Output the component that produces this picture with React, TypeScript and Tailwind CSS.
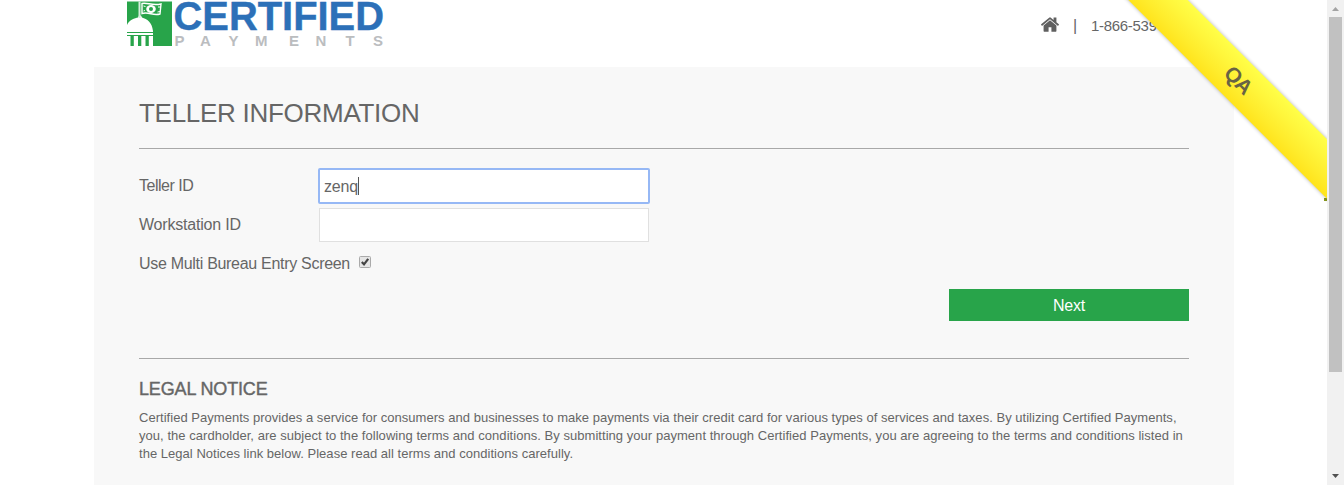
function Logo() {
  return (
    <svg width="258" height="48" viewBox="0 0 258 48" className="block overflow-visible" aria-label="Certified Payments">
      <rect x="0" y="1.500" width="45" height="44.500" fill="#28a44a" />
      <path d="M0 25C2 20 8 18 11 17.5L12 15.5H14L15 17.5C20 19 25 22 26 31V46H0Z" fill="#fff" />
      <path d="M11.500 1.500H13.500V18H11.500Z" fill="#d5efdc" />
      <path d="M0 32.500H26M0 35.500H26" stroke="#28a44a" strokeWidth="1" />
      <path d="M3.500 36H6.800V46H3.500ZM11 36H14.300V46H11ZM18.500 36H21.800V46H18.500Z" fill="#28a44a" />
      <path d="M15 3.500C20 2 25 6.200 34 4L33 14C26 16.200 22 11.500 15 13.500Z" fill="#28a44a" stroke="#fff" strokeWidth="1.400" />
      <ellipse cx="24" cy="9" rx="4.8" ry="4" fill="#fff" />
      <ellipse cx="24" cy="9" rx="2" ry="2.1" fill="#28a44a" />
      <path d="M16.500 6L18.500 6.500M31 7L33 7M16.500 11L18 10.500M30.500 12L33 11.500" stroke="#fff" strokeWidth="1" />
      <text x="46.500" y="30" textLength="210.500" lengthAdjust="spacingAndGlyphs" fill="#2c70b8" stroke="#2c70b8" strokeWidth=".4" className="font-['Liberation_Sans',sans-serif] text-[41px] font-bold">CERTIFIED</text>
      <text x="47.500 73 101.500 128 162 188.500 218.500 246" y="46" fill="#bbbdbf" className="font-['Liberation_Sans',sans-serif] text-[15px] font-bold">PAYMENTS</text>
    </svg>
  );
}

function HomeIcon() {
  return (
    <svg viewBox="24 250 1616 1290" className="h-[15px] w-[18px] shrink-0" fill="#606060">
      <path d="M1408 992v480q0 26-19 45t-45 19H960v-384H704v384H320q-26 0-45-19t-19-45V992q0-1 .5-3t.5-3l575-474 575 474q1 2 1 6zm223-69l-62 74q-8 9-21 11h-3q-13 0-21-7L832 424 140 1001q-12 8-24 7-13-2-21-11l-62-74q-8-10-7-23.5T37 878l719-599q32-26 76-26t76 26l244 204V288q0-14 9-23t23-9h192q14 0 23 9t9 23v408l219 182q10 8 11 21.500t-7 23.500z" />
    </svg>
  );
}

export default function App() {
  return (
    <div className="flex h-[485px] w-[1344px] overflow-hidden bg-white font-['Liberation_Sans',Arial,sans-serif] text-[16px] leading-[20px] text-[#666]">
      <div className="relative h-full w-[1327px] overflow-hidden">
        <header className="flex h-[67px] items-start justify-between pl-[127px]">
          <Logo />
          <div className="flex w-[286px] items-center pt-4 whitespace-nowrap">
            <div className="pb-[3px]"><HomeIcon /></div>
            <span className="ml-[14px] w-[18px]">|</span>
            <span className="text-[15px] tracking-[-0.3px]">1-866-539-2020</span>
          </div>
        </header>
        <main className="ml-[94px] h-[418px] w-[1140px] bg-[#f8f8f8] px-[45px] pt-[31px]">
          <h1 className="h-[51px] border-b border-[#a8a8a8] text-[26px] leading-[30px] tracking-[-0.28px] whitespace-nowrap">TELLER INFORMATION</h1>
          <div className="mt-[19px] flex h-9 items-center">
            <label className="w-[179px] tracking-[-0.5px]">Teller ID</label>
            <div className="flex h-9 w-[332px] items-center rounded-[2px] border-2 border-[#96b8f5] bg-white pl-1">
              <span className="pt-[2px] tracking-[-0.2px]">zenq</span>
              <span className="h-[18px] w-px bg-[#555]" />
            </div>
          </div>
          <div className="mt-[3px] flex h-[35px] items-center">
            <label className="w-[180px] tracking-[-0.2px]">Workstation ID</label>
            <div className="h-[34px] w-[330px] border border-[#e0e0e0] bg-white" />
          </div>
          <div className="mt-3 flex h-5 items-center">
            <label className="w-[220px] tracking-[-0.3px]">Use Multi Bureau Entry Screen</label>
            <svg width="12" height="12" viewBox="0 0 12 12" className="mb-1 block">
              <rect x=".5" y=".5" width="11" height="11" rx="1" fill="#e5e5e5" stroke="#aaa" />
              <path d="M2.800 6L5 8.300L9.200 2.800" fill="none" stroke="#444" strokeWidth="2.200" />
            </svg>
          </div>
          <div className="mt-[15px] flex justify-end">
            <button className="h-8 w-[240px] bg-[#28a44a] pt-px text-[16px] tracking-[-0.2px] text-white">Next</button>
          </div>
          <section className="mt-[37px] border-t border-[#a8a8a8] pt-5">
            <h2 className="text-[18px] leading-5 font-normal tracking-[-0.15px] [-webkit-text-stroke:0.4px_#666]">LEGAL NOTICE</h2>
            <div className="mt-[10px] text-[13px] leading-[18px] tracking-[0.028px] whitespace-nowrap">
              <p>Certified Payments provides a service for consumers and businesses to make payments via their credit card for various types of services and taxes. By utilizing Certified Payments,</p>
              <p className="tracking-[0.042px]">you, the cardholder, are subject to the following terms and conditions. By submitting your payment through Certified Payments, you are agreeing to the terms and conditions listed in</p>
              <p>the Legal Notices link below. Please read all terms and conditions carefully.</p>
            </div>
          </section>
        </main>
        <div className="absolute top-[198px] left-[1324px] h-[3px] w-[3px] bg-[#8a9a1e]" />
        <div className="absolute top-[58px] left-[1017px] flex h-[42px] w-[440px] rotate-45 items-center justify-center bg-linear-to-t from-[#ffe41b] to-[#ffff48] text-[21px] font-bold text-[#686344] shadow-[0_0_4px_rgba(0,0,0,0.3)]">
          <span className="pl-[3px] tracking-[-1px]">QA</span>
        </div>
      </div>
      <div className="flex h-full w-[17px] flex-col items-center bg-[#f1f1f1]">
        <svg width="17" height="17" viewBox="0 0 17 17"><path d="M5 11L8.500 7L12 11Z" fill="#a3a3a3" /></svg>
        <div className="h-[355px] w-[13px] bg-[#c1c1c1]" />
        <svg width="17" height="17" viewBox="0 0 17 17" className="mt-auto"><path d="M5 6L8.500 10L12 6Z" fill="#505050" /></svg>
      </div>
    </div>
  );
}
